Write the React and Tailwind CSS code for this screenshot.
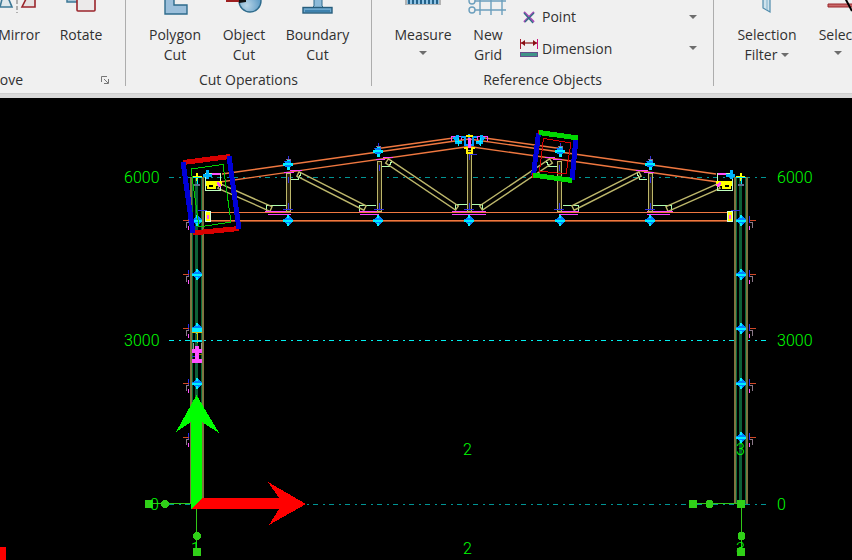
import React from 'react';

const Caret = ({ className = '' }) => (
  <svg viewBox="0 0 8 4" width="8" height="4" className={className} aria-hidden="true">
    <path d="M0 0h8L4 4z" fill="#6d6d6d" />
  </svg>
);

/* ---------- Ribbon icons (only the lower part is on screen) ---------- */

const MirrorIcon = () => (
  <svg width="38" height="16" viewBox="0 0 38 16" aria-hidden="true">
    <path d="M0 7h12L7-5H3z" fill="#dfe8ec" stroke="#3d7896" strokeWidth="1.6" />
    <path d="M17 0v13" stroke="#999" strokeWidth="1.5" strokeDasharray="4 2" />
    <path d="M27-3 22 7h13V-3z" fill="#e6e2e2" stroke="#9a252b" strokeWidth="1.6" />
  </svg>
);

const RotateIcon = () => (
  <svg width="32" height="16" viewBox="0 0 32 16" aria-hidden="true">
    <path d="M2-2v4h12v-4" fill="#a9c6d6" stroke="#3d7896" strokeWidth="1.5" />
    <rect x="12" y="-7" width="18" height="18" rx="1" fill="#eceaea" stroke="#9a252b" strokeWidth="1.6" />
  </svg>
);

const PolygonCutIcon = () => (
  <svg width="32" height="16" viewBox="0 0 32 16" aria-hidden="true">
    <path d="M6-3v17h22V5H15v-8z" fill="#9bbfdb" stroke="#2e6b8c" strokeWidth="1.4" />
  </svg>
);

const ObjectCutIcon = () => (
  <svg width="40" height="16" viewBox="0 0 40 16" aria-hidden="true">
    <defs>
      <radialGradient id="ball" cx="35%" cy="70%" r="60%">
        <stop offset="0" stopColor="#b9d6e8" />
        <stop offset="1" stopColor="#65a0c8" />
      </radialGradient>
    </defs>
    <circle cx="26" cy="1" r="11" fill="url(#ball)" stroke="#2e6b8c" strokeWidth="1.4" />
    <path d="M2-3h20v5H2z" fill="#9d1f20" />
    <path d="M15 3v-5h7v4z" fill="#111" />
  </svg>
);

const BoundaryCutIcon = () => (
  <svg width="32" height="16" viewBox="0 0 32 16" aria-hidden="true">
    <path d="M12-2h8v8l2 2H10l2-2z" fill="#8dbbd9" stroke="#2e6b8c" />
    <rect x="1" y="7.5" width="29" height="5.500" fill="#6da8ce" stroke="#275d7c" strokeWidth="1.4" />
    <path d="M3 11h25" stroke="#2f76a5" strokeWidth="1.5" />
  </svg>
);

const MeasureIcon = () => (
  <svg width="36" height="16" viewBox="0 0 36 16" aria-hidden="true">
    <path d="M0-2h36v7H0z" fill="#b3b3b3" />
    <path d="M2-2h32v6H2z" fill="#8fc3e4" />
    <path d="M4-2v6M8-2v6M12-2v6M16-2v6M20-2v6M24-2v6M28-2v6M32-2v6" stroke="#23628a" strokeWidth="2" />
  </svg>
);

const NewGridIcon = () => (
  <svg width="40" height="16" viewBox="0 0 40 16" fill="none" stroke="#6c9fbd" strokeWidth="1.4" aria-hidden="true">
    <path d="M7 1h31M7 10h31M12-2v17M23-2v17M34-2v17" />
    <circle cx="4" cy="1" r="3" fill="#f0f0f0" />
    <circle cx="4" cy="10" r="3" fill="#f0f0f0" />
  </svg>
);

const PointIcon = () => (
  <svg width="18" height="18" viewBox="0 0 18 18" className="shrink-0" aria-hidden="true">
    <path d="M4 4l10 10M14 4L4 14" stroke="#a94bb8" strokeWidth="2" />
    <path d="M4 5l9 10M14 5L5 14" stroke="#2f6f84" strokeWidth="1.2" />
  </svg>
);

const DimensionIcon = () => (
  <svg width="18" height="20" viewBox="0 0 18 20" className="shrink-0" aria-hidden="true">
    <path d="M.5 1v10" stroke="#a5182c" />
    <path d="M17.5 1v10" stroke="#d0107c" />
    <path d="M1 5h16" stroke="#8a0f14" strokeWidth="1.2" />
    <path d="M1 5l4-3v6zM17 5l-4-3v6z" fill="#8a0f14" />
    <rect x=".5" y="14.5" width="17" height="4" fill="#3f9488" stroke="#674f8c" />
  </svg>
);

const FilterIcon = () => (
  <svg width="10" height="16" viewBox="0 0 10 16" aria-hidden="true">
    <path d="M1-2v10l7 4V-2z" fill="#cfe2ec" stroke="#4f8bac" strokeWidth="1.2" />
    <path d="M5-2v12" stroke="#7fb0cb" />
  </svg>
);

const SelectIcon = () => (
  <svg width="40" height="16" viewBox="0 0 40 16" aria-hidden="true">
    <path d="M10 4h30v3H10z" fill="#c96868" stroke="#9a252b" />
    <path d="M27-2l7 13" stroke="#000" strokeWidth="2" />
  </svg>
);

/* ---------- Ribbon ---------- */

const RibbonButton = ({ icon, lines, caret, className = '' }) => (
  <button type="button" className={`flex shrink-0 flex-col items-center ${className}`}>
    <span className="flex h-4 justify-center">{icon}</span>
    <span className="mt-[9px] flex flex-col items-center leading-5 whitespace-nowrap">
      {lines.map((line, i) => (
        <span key={line} className="flex items-center gap-1">
          {line}
          {caret === 'inline' && i === lines.length - 1 && <Caret />}
        </span>
      ))}
    </span>
    {caret === 'below' && <Caret className="mt-[6px]" />}
  </button>
);

const SmallButton = ({ icon, label }) => (
  <button type="button" className="flex h-8 w-full items-center gap-1">
    {icon}
    <span>{label}</span>
    <Caret className="ml-auto" />
  </button>
);

const Group = ({ title, className = '', children }) => (
  <section className={`flex h-[86px] flex-col justify-between ${className}`}>
    <div className="flex h-16">{children}</div>
    {title}
  </section>
);

const Ribbon = () => (
  <header className="overflow-hidden border-b-4 border-[#d9d9d9] bg-[#f0f0f0] font-['Open_Sans','Noto_Sans',sans-serif] text-[14px] text-[#303030]">
    <div className="flex h-[94px] border-b border-[#cfcfcf]">
      <Group
        className="w-[126px] shrink-0 overflow-hidden border-r border-[#adadad]"
        title={
          <div className="flex h-3 items-center justify-end gap-[78px] pr-4 leading-3">
            <h2>Move</h2>
            <button type="button" aria-label="Move settings">
              <svg width="8" height="8" viewBox="0 0 8 8" fill="none" stroke="#777" aria-hidden="true">
                <path d="M.5 6V.5H6M3 3l4 4M7.5 3v4.5H3" />
              </svg>
            </button>
          </div>
        }
      >
        <div className="flex w-full justify-end pr-[13px]">
          <RibbonButton className="w-[62px]" icon={<MirrorIcon />} lines={['Mirror']} />
          <RibbonButton className="w-[62px]" icon={<RotateIcon />} lines={['Rotate']} />
        </div>
      </Group>

      <Group
        className="w-[246px] shrink-0 border-r border-[#adadad]"
        title={<h2 className="h-3 text-center leading-3">Cut Operations</h2>}
      >
        <div className="flex w-full justify-center">
          <RibbonButton className="w-[70px]" icon={<PolygonCutIcon />} lines={['Polygon', 'Cut']} />
          <RibbonButton className="w-[68px]" icon={<ObjectCutIcon />} lines={['Object', 'Cut']} />
          <RibbonButton className="w-[79px]" icon={<BoundaryCutIcon />} lines={['Boundary', 'Cut']} />
        </div>
      </Group>

      <Group
        className="w-[342px] shrink-0 border-r border-[#adadad]"
        title={<h2 className="h-3 text-center leading-3">Reference Objects</h2>}
      >
        <div className="flex w-full pr-4 pl-3">
          <RibbonButton className="w-[78px]" icon={<MeasureIcon />} lines={['Measure']} caret="below" />
          <RibbonButton className="w-[52px]" icon={<NewGridIcon />} lines={['New', 'Grid']} />
          <div className="flex flex-1 flex-col pt-px pl-1.5">
            <SmallButton icon={<PointIcon />} label="Point" />
            <SmallButton icon={<DimensionIcon />} label="Dimension" />
          </div>
        </div>
      </Group>

      <Group className="min-w-0 flex-1 overflow-hidden" title={null}>
        <div className="flex pl-3">
          <RibbonButton className="w-[82px]" icon={<FilterIcon />} lines={['Selection', 'Filter']} caret="inline" />
          <RibbonButton className="w-[60px]" icon={<SelectIcon />} lines={['Select']} caret="below" />
        </div>
      </Group>
    </div>
  </header>
);

/* ---------- Model view ---------- */

const ORANGE = '#f07840';
const KHAKI = '#bdb76b';

const GridLine = ({ y, color }) => (
  <path d={`M169 ${y}H766`} stroke={color} strokeDasharray="5 5 2 4" />
);

const Handle = ({ x, y }) => (
  <g>
    <path d={`M${x} ${y - 5}l4 4h1v3h-1l-4 4-4-4h-1v-3h1z`} fill="#0084ff" />
    <path d={`M${x - 5} ${y + 0.5}h10M${x} ${y - 5}v3M${x} ${y + 3}v3`} stroke="#00f0ff" strokeWidth="2" />
  </g>
);

const ChordHandle = ({ x, y }) => (
  <g>
    <path d={`M${x - 4} ${y - 3}h6M${x} ${y - 8}v4`} stroke="#3030e0" />
    <path d={`M${x - 2} ${y - 5}h4v3`} stroke="#8a6a98" fill="none" />
    <path d={`M${x - 5} ${y}h10M${x} ${y - 4}v10`} stroke="#00f0ff" strokeWidth="3" />
    <path d={`M${x - 3} ${y - 2}h6M${x - 3} ${y + 2}h6`} stroke="#0084ff" strokeWidth="2" />
  </g>
);

const Post = ({ x, top }) => (
  <g>
    <rect x={x - 2} y={top} width="4" height={211 - top} fill="#28220c" stroke={KHAKI} />
    <path d={`M${x} ${top + 4}v6M${x} ${203}v6M${x - 5} 209h10`} stroke="#3030e0" />
  </g>
);

// diagonal brace, drawn as two parallel lines with closed ends
const Brace = ({ x1, y1, x2, y2 }) => {
  const len = Math.hypot(x2 - x1, y2 - y1);
  const dx = ((y2 - y1) / len) * 2.5;
  const dy = ((x2 - x1) / len) * 2.5;
  return (
    <path
      d={`M${x1 + dx} ${y1 - dy}L${x2 + dx} ${y2 - dy}L${x2 - dx} ${y2 + dy}L${x1 - dx} ${y1 + dy}Z`}
      fill="none"
      stroke={KHAKI}
      strokeWidth="1.400"
      shapeRendering="auto"
    />
  );
};

const HalfTruss = () => (
  <g>
    <g stroke={ORANGE} strokeWidth="1.400" fill="none" shapeRendering="auto">
      <path d="M222 174L378 152L469 139" />
      <path d="M378 148.500L457 137.500" />
      <path d="M220 182L469 146.500" />
    </g>
    <g fill="none" stroke="#b0ffb0">
      <path d="M266.500 211V205.500H288M291 179.500h7l3-6M359.500 211v-5.500h16M381 166.500h8l3-6M455.500 209v-4.500H469" />
    </g>
    <Brace x1={219} y1={186} x2={271} y2={209} />
    <Brace x1={298} y1={174} x2={365} y2={208} />
    <Brace x1={387} y1={161} x2={457} y2={208} />
    <path d="M265 211.500h26M268 214.500h23M359 211.500h20M360 214.500h19M452 211.500h17M452 214.500h17" stroke="#ff40ff" />
    <path d="M284 172.500h10M290 170.500h12M376 159.500h9M383 157.500h10" stroke="#ff40ff" />
    <path d="M451 141v-5h10v4" fill="none" stroke="#ff40ff" />
    <path d="M454 137l6 7M455 142h7M457 135v4" stroke="#00b4ff" strokeWidth="3" />
    <path d="M455 141h7M458 138v8" stroke="#00f0ff" />
    <Post x={288} top={173} />
    <Post x={379} top={161} />
  </g>
);

const Column = ({ x }) => (
  <g>
    <rect x={x - 7} y="177" width="14" height="327" fill="#000" />
    <path d={`M${x - 6} 177V504M${x + 6} 177V504`} stroke="#7d7540" strokeWidth="2" />
    <path d={`M${x - 4.5} 177V504M${x + 4.5} 177V504`} stroke="#0a6a38" />
    <path d={`M${x - 0.5} 177V504`} stroke="#0d6038" strokeWidth="3" />
    {[221, 275, 329, 384, 438].map((y) => (
      <Handle key={y} x={x} y={y - 1} />
    ))}
  </g>
);

// side clip of a wall girt; dir is -1 on the left column, 1 on the right
const Clip = ({ x, y, dir }) => (
  <g fill="none">
    <path d={`M${x} ${y - 5}v7`} stroke="#2828f0" />
    <path d={`M${x} ${y - 0.5}h${dir * 6}`} stroke="#d04828" />
    <path d={`M${x} ${y + 1.5}h${dir * 2.5}v5`} stroke="#8a7888" />
    <path d={`M${x} ${y + 5}v4`} stroke="#ff50ff" />
  </g>
);

const Label = ({ x, y, children }) => (
  <text x={x} y={y} fill="#00ff00" className="font-['Roboto','Liberation_Sans',sans-serif] text-[16px] font-light">
    {children}
  </text>
);

const ModelView = () => (
  <svg viewBox="0 98 852 462" className="block w-full bg-black" shapeRendering="crispEdges" role="img" aria-label="Truss frame elevation">
    <GridLine y={177.5} color="#009595" />
    <GridLine y={340.5} color="#00eeee" />
    <GridLine y={504.5} color="#009595" />

    <Column x={197} />
    <Column x={741} />
    {[221, 275, 329, 384, 438].map((y) => (
      <g key={y}>
        <Clip x={188.5} y={y + 0} dir={-1} />
        <Clip x={749.5} y={y + 0} dir={1} />
      </g>
    ))}

    {/* Splice on the left column */}
    <path d="M192 332.500h10M197 333v10" stroke="#d0c010" />
    <path d="M192 331h10M192 340.500h10" stroke="#00f0ff" strokeWidth="2" />
    <path d="M193 343v6M201 343v6" stroke="#999" />
    <path d="M195 346h4v3h3v4h-3v6h3v4h-10v-4h3v-6h-3v-4h3z" fill="#ff50ff" />
    <path d="M192 356.500h3" stroke="#3030e0" />
    <path d="M199 354.500h3" stroke="#8a7000" />

    {/* Truss */}
    <HalfTruss />
    <g transform="translate(938 0) scale(-1 1)">
      <HalfTruss />
    </g>
    <path d="M208 212.500H730M205 220.500H731" stroke={ORANGE} />
    <path d="M205 221.500H731" stroke="#9a4820" />
    <Post x={469} top={150} />
    <path d="M461 137h4v8h8v-8h4M469 134v10" fill="none" stroke="#00a0ff" strokeWidth="2" />
    <path d="M464 148h3v5h5v-5h3M466 136h7" fill="none" stroke="#fff000" strokeWidth="2" />
    <path d="M469 138v10" stroke="#ff50ff" strokeWidth="3" />
    <path d="M470 154.500h7" stroke="#3030e0" />
    {[288, 378, 469, 560, 650].map((x) => (
      <Handle key={x} x={x} y={220} />
    ))}
    <ChordHandle x={288} y={164} />
    <ChordHandle x={378} y={151} />
    <ChordHandle x={560} y={151} />
    <ChordHandle x={650} y={164} />

    {/* Knee connections */}
    {[false, true].map((flip) => (
      <g key={String(flip)} transform={flip ? 'translate(938 0) scale(-1 1)' : undefined}>
        <path d="M205.500 173.500h15v17h-15z" fill="none" stroke="#c0ffc0" />
        <path d="M206 181h16v5h-6v3h-9v-3h-1z" fill="#ffff00" />
        <path d="M209 185h4v2h-4z" />
        <path d="M212 174h8" stroke="#ff50ff" strokeWidth="2" />
        <path d="M217 183l4 3" stroke="#ff50ff" strokeWidth="3" />
        <path d="M205.500 211.500v10h5v-10z" fill="#ffff00" stroke="#d8ffd8" />
        <path d="M208 215v4" stroke="#ff50ff" strokeWidth="2" />
        <path d="M198 210.500h9" stroke="#3030e0" />
        <path d="M203 175.500h9M207 170v9" stroke="#00b4ff" strokeWidth="3" />
        <path d="M193 176.500h9M197 173v8" stroke="#ffff00" strokeWidth="2" />
        <path d="M192 177.500h10M197 179v5" stroke="#00f0ff" />
        <path d="M194 185h6" stroke="#607090" strokeWidth="2" />
      </g>
    ))}

    {/* Detail boxes */}
    <path d="M191 169L223 164.500L231 222L199 227z" fill="none" stroke="#00d000" />
    <path d="M183 162.500L230 156.500M193 233L239 228.500" stroke="#d80000" strokeWidth="5" />
    <path d="M183 162L193 233M229 156L239 229" stroke="#0000d8" strokeWidth="5" />
    <path d="M543.500 138.500L571 143L566 174L539.500 171z" fill="none" stroke="#d80000" />
    <path d="M538.500 133L533.500 175M576 138L572 180" stroke="#0000d8" strokeWidth="5" />
    <path d="M539 132.500L578 138M533 175L572 180.500" stroke="#00d800" strokeWidth="5" />
    <path d="M538.500 130v4M532.500 173v5" stroke="#e00000" />

    {/* Grid end handles */}
    <g fill="#30d018" stroke="#30c818">
      <path d="M150 503.500H191M196.500 504V550M694 503.500H741M741.500 504V550" />
      <g stroke="none">
        <path d="M145 500h8v8h-8zM689 500h8v8h-8zM737 500h8v8h-8z" />
        <circle cx="165" cy="504" r="4" />
        <circle cx="197" cy="536" r="4" />
        <circle cx="709.500" cy="504" r="4" />
        <circle cx="741.500" cy="536" r="4" />
      </g>
    </g>

    {/* Grid labels */}
    <Label x={124} y={183}>6000</Label>
    <Label x={124} y={346}>3000</Label>
    <Label x={150} y={510}>0</Label>
    <Label x={777} y={183}>6000</Label>
    <Label x={777} y={346}>3000</Label>
    <Label x={777} y={510}>0</Label>
    <Label x={463} y={455}>2</Label>
    <Label x={463} y={554}>2</Label>
    <Label x={736} y={455}>3</Label>
    <Label x={736} y={554}>3</Label>
    <Label x={191} y={554}>1</Label>
    <path d="M193 548h8v8h-8zM737 548h8v8h-8z" fill="#30d018" />

    {/* Axes */}
    <path d="M196.500 395L219 433L202 422V498L191 509V422L176 432z" fill="#00ff00" />
    <path d="M306 504L268 482L279 498H202L192 509H279L269 525z" fill="#ff0000" />
    <path d="M0 547h6v13H0z" fill="#ff0000" />
  </svg>
);

const App = () => (
  <main className="min-h-screen overflow-hidden bg-black">
    <Ribbon />
    <ModelView />
  </main>
);

export default App;
